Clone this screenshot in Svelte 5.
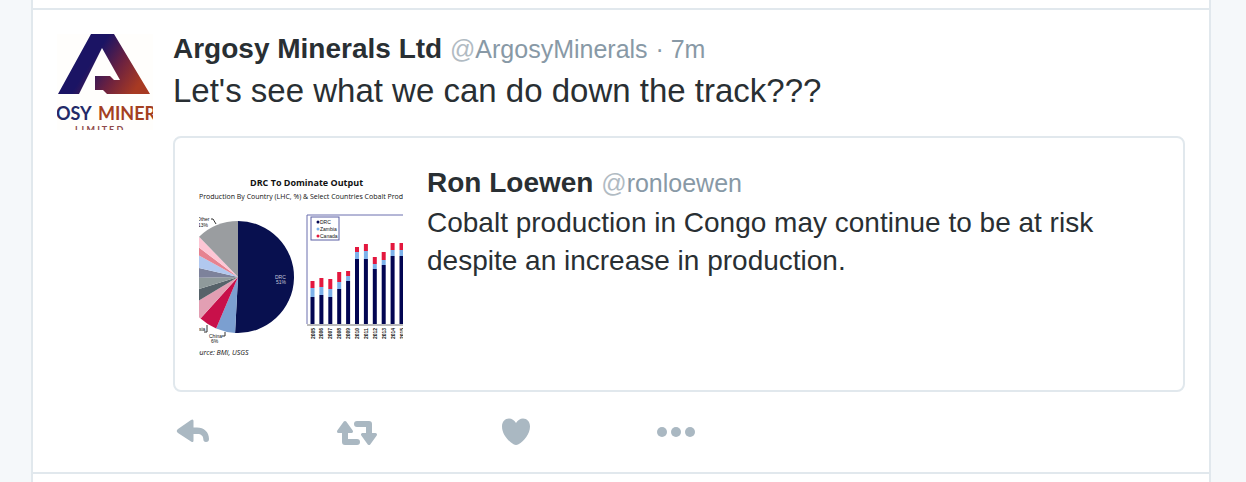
<script>
	const PIE_CX = 39;
	const PIE_CY = 115;
	const PIE_R = 56;
	const AXIS_Y = 162;

	const tweet = {
		name: 'Argosy Minerals Ltd',
		handle: 'ArgosyMinerals',
		time: '7m',
		text: "Let's see what we can do down the track???"
	};

	const quote = {
		name: 'Ron Loewen',
		handle: 'ronloewen',
		text: 'Cobalt production in Congo may continue to be at risk despite an increase in production.'
	};

	// end angle of each slice, clockwise from the top
	const slices = [
		{ end: 183, color: '#08104f' },
		{ end: 203, color: '#7b9fd0' },
		{ end: 222, color: '#c8104a' },
		{ end: 239, color: '#e29fb3' },
		{ end: 253, color: '#566269' },
		{ end: 269, color: '#8f9a9b' },
		{ end: 283, color: '#7d829b' },
		{ end: 299, color: '#b1c8ef' },
		{ end: 307, color: '#e68290' },
		{ end: 316, color: '#fdc6d5' },
		{ end: 360, color: '#9a9da0' }
	];

	// top of the red, blue and navy part of each bar
	const bars = [
		{ year: 2005, tops: [119, 126, 135] },
		{ year: 2006, tops: [116, 125, 133] },
		{ year: 2007, tops: [117, 127, 135] },
		{ year: 2008, tops: [110, 120, 127] },
		{ year: 2009, tops: [109, 114, 119] },
		{ year: 2010, tops: [85, 90, 97] },
		{ year: 2011, tops: [82, 89, 97] },
		{ year: 2012, tops: [95, 102, 107] },
		{ year: 2013, tops: [90, 98, 103] },
		{ year: 2014, tops: [81, 88, 94] },
		{ year: 2015, tops: [81, 88, 94] }
	];
	const barColors = ['#e3173e', '#7db1ea', '#020552'];

	const legend = [
		{ label: 'DRC', color: '#020552' },
		{ label: 'Zambia', color: '#7db1ea' },
		{ label: 'Canada', color: '#e3173e' }
	];

	function point(angle) {
		const rad = (angle * Math.PI) / 180;
		return `${PIE_CX + PIE_R * Math.sin(rad)} ${PIE_CY - PIE_R * Math.cos(rad)}`;
	}

	function slicePath(i) {
		const start = i === 0 ? 0 : slices[i - 1].end;
		const end = slices[i].end;
		const large = end - start > 180 ? 1 : 0;
		return `M${PIE_CX} ${PIE_CY}L${point(start)}A${PIE_R} ${PIE_R} 0 ${large} 1 ${point(end)}Z`;
	}
</script>

<main class="page">
	<div class="timeline">
		<div class="previous"></div>
		<article class="tweet">
			<a class="avatar" href="#profile" aria-label={tweet.name}>
				<svg viewBox="0 0 96 96">
					<defs>
						<linearGradient
							id="mark"
							gradientUnits="userSpaceOnUse"
							x1="38"
							y1="22"
							x2="82"
							y2="50"
						>
							<stop offset="0" stop-color="#1b1464" />
							<stop offset="0.5" stop-color="#6b2140" />
							<stop offset="1" stop-color="#a83a22" />
						</linearGradient>
					</defs>
					<rect width="96" height="96" fill="#fffefc" />
					<path
						d="M34 0H57L93 60H50L46 56H38V42H53L57 46H63L45 14L22 60H1Z"
						fill="url(#mark)"
					/>
					<text class="logo" x="-1" y="86" fill="#232a68">OSY</text>
					<text class="logo" x="41" y="86" fill="#a4401f">MINER</text>
					<text class="limited" x="18" y="99">L I M I T E D</text>
				</svg>
			</a>

			<div class="content">
				<header class="byline">
					<a class="name" href="#profile">{tweet.name}</a>
					<a class="handle" href="#profile"><span class="at">@</span>{tweet.handle}</a>
					<span class="time">· <a href="#status">{tweet.time}</a></span>
				</header>
				<p class="text">{tweet.text}</p>

				<section class="quote">
					<svg class="media" viewBox="0 0 204 204" role="img" aria-label="Cobalt output chart">
						<text class="title" x="51" y="24">DRC To Dominate Output</text>
						<text class="subtitle" x="0" y="37">Production By Country (LHC, %) &amp; Select Countries Cobalt Production</text>

						{#each slices as slice, i}
							<path d={slicePath(i)} fill={slice.color} />
						{/each}
						<text class="tiny light" x="76" y="117">DRC</text>
						<text class="tiny light" x="77" y="122">51%</text>
						<text class="tiny" x="-2" y="59">Other</text>
						<text class="tiny" x="-1" y="65">13%</text>
						<path class="leader" d="M12 57H14L17 62" />
						<text class="tiny" x="-9" y="169">Russia</text>
						<path class="leader" d="M5 170H8V163" />
						<text class="tiny" x="10" y="176">China</text>
						<text class="tiny" x="12" y="181">6%</text>
						<path class="leader" d="M23 174H26V170" />
						<text class="source" x="-7" y="193">Source: BMI, USGS</text>

						<path d="M204 53H108V162" fill="none" stroke="#6a6fae" />
						<path d="M108 163H204" stroke="#777" />
						<rect x="112" y="55" width="28" height="23" fill="#fff" stroke="#5a5fa4" />
						{#each legend as item, i}
							<circle cx="119" cy={60 + i * 7} r="1.5" fill={item.color} />
							<text class="tiny" x="121" y={62 + i * 7}>{item.label}</text>
						{/each}
						{#each bars as bar, i}
							{#each bar.tops as top, part}
								<rect
									x={111.5 + i * 8.9}
									y={top}
									width="4"
									height={(bar.tops[part + 1] ?? AXIS_Y) - top}
									fill={barColors[part]}
								/>
							{/each}
							<text class="tiny year" transform="translate({115.5 + i * 8.9} 177) rotate(-90)">{bar.year}</text>
						{/each}
					</svg>
					<div class="quote-body">
						<div class="quote-byline">
							<a class="name" href="#quoted">{quote.name}</a>
							<a class="handle" href="#quoted"><span class="at">@</span>{quote.handle}</a>
						</div>
						<p class="quote-text">{quote.text}</p>
					</div>
				</section>

				<div class="actions">
					<button type="button" aria-label="Reply">
						<svg viewBox="0 0 48 32">
							<path
								d="M5 13L18 4Q20.500 2.500 20.500 5V11.500H24C31 11.500 36 16 36 23Q36 26 33 26Q30.300 26 30.300 23C30.300 20 28 18 24.500 18H20.500V24.500Q20.500 27 18 25.500L5 17Q2.500 15 5 13Z"
							/>
						</svg>
					</button>
					<button type="button" aria-label="Retweet">
						<svg viewBox="0 0 48 32">
							<path class="line" d="M12 14V26H24M24 8H36V20" />
							<path class="head" d="M12 6.500L18.500 15.500H5.500ZM36 27.500L29.500 18.500H42.500Z" />
						</svg>
					</button>
					<button type="button" aria-label="Like">
						<svg viewBox="0 0 48 32">
							<path
								d="M23 7C21 4 19 2.500 16 2.500C12 2.500 9 5.500 9 10.500C9 18 15 25 20.500 28.300Q23 29.700 25.500 28.300C31 25 37 18 37 10.500C37 5.500 34 2.500 30 2.500C27 2.500 25 4 23 7Z"
							/>
						</svg>
					</button>
					<button type="button" aria-label="More">
						<svg viewBox="0 0 48 32">
							<circle cx="9" cy="16" r="5" />
							<circle cx="23" cy="16" r="5" />
							<circle cx="37" cy="16" r="5" />
						</svg>
					</button>
				</div>
			</div>
		</article>
	</div>
</main>

<style>
	:global(body) {
		background: #f5f8fa;
	}
	.page {
		box-sizing: border-box;
		display: flex;
		min-height: 100vh;
		padding: 0 35px 0 31px;
		font-family: 'Helvetica Neue', 'Liberation Sans', Arial, sans-serif;
		font-size: 28px;
		color: #292f33;
	}
	.timeline {
		flex: 1;
		min-width: 0;
		background: #fff;
		border: solid #e1e8ed;
		border-width: 0 2px;
	}
	.previous {
		height: 8px;
		border-bottom: 2px solid #e1e8ed;
	}
	.tweet {
		display: flex;
		gap: 20px;
		padding: 24px;
		border-bottom: 2px solid #e1e8ed;
	}
	.avatar {
		flex: none;
		width: 96px;
	}
	svg {
		display: block;
	}
	.content {
		flex: 1;
		min-width: 0;
	}
	a {
		color: inherit;
		text-decoration: none;
	}
	p {
		margin: 0;
	}
	.byline {
		line-height: 30px;
	}
	.name {
		font-weight: bold;
	}
	.handle,
	.time {
		font-size: 25px;
		color: #8899a6;
	}
	.at {
		color: #b1bbc3;
	}
	.text {
		margin: 6px 0 24px;
		font-size: 33px;
		line-height: 42px;
	}
	.quote {
		display: flex;
		gap: 24px;
		padding: 24px;
		border: 2px solid #e1e8ed;
		border-radius: 8px;
	}
	.media {
		flex: none;
		width: 204px;
		height: 204px;
	}
	.quote-body {
		padding-top: 2px;
		line-height: 38px;
	}
	.quote-byline {
		margin-bottom: 2px;
	}
	.actions {
		display: flex;
		margin-top: 24px;
	}
	.actions button {
		width: 160px;
		padding: 0;
		border: 0;
		background: none;
		cursor: pointer;
	}
	.actions svg {
		width: 48px;
		height: 32px;
		fill: #aab8c2;
	}
	.actions .line {
		fill: none;
		stroke: #aab8c2;
		stroke-width: 6;
		stroke-linecap: round;
		stroke-linejoin: round;
	}
	.actions .head {
		stroke: #aab8c2;
		stroke-width: 3;
		stroke-linejoin: round;
	}

	/* avatar */
	.logo {
		font: bold 18px Lato, sans-serif;
	}
	.limited {
		font: bold 9px Lato, sans-serif;
		fill: #8f4a4a;
	}

	/* chart */
	.media text {
		font-family: 'Open Sans', sans-serif;
		fill: #111;
	}
	.media .title {
		font-size: 9px;
		font-weight: bold;
	}
	.media .subtitle {
		font-size: 7px;
	}
	.media .tiny {
		font-family: 'Liberation Sans', sans-serif;
		font-size: 5px;
	}
	.media .light {
		fill: #c5c8dc;
	}
	.media .year {
		font-weight: bold;
	}
	.media .source {
		font-size: 7px;
		font-style: italic;
	}
	.leader {
		fill: none;
		stroke: #333;
	}
</style>
